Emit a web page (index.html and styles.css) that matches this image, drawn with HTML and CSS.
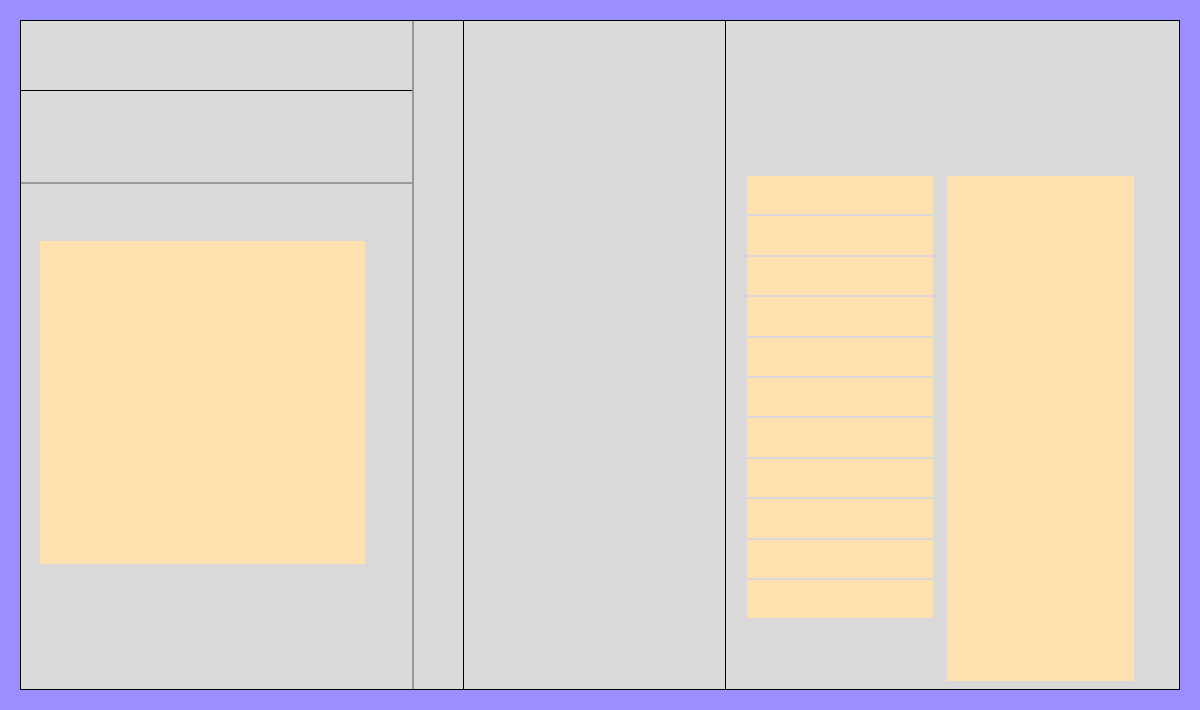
FILE: index.html
```html
<!DOCTYPE html>
<html lang="en">
<head>
    <meta charset="UTF-8">
    <meta name="viewport" content="width=device-width, initial-scale=1.0">
    <title>Layout</title>
    <link rel="stylesheet" href="styles.css">
</head>
<body>
    <div class="frame">
        <div class="col col-left">
            <div class="row row-top"></div>
            <div class="row row-mid"></div>
            <div class="row row-bottom">
                <div class="block"></div>
            </div>
        </div>
        <div class="col col-narrow"></div>
        <div class="col col-middle"></div>
        <div class="col col-right">
            <div class="panel">
                <ul class="list">
                    <li></li>
                    <li></li>
                    <li></li>
                    <li></li>
                    <li></li>
                    <li></li>
                    <li></li>
                    <li></li>
                    <li></li>
                    <li></li>
                    <li></li>
                </ul>
                <div class="tall"></div>
            </div>
        </div>
    </div>
</body>
</html>
```

FILE: styles.css
```css
html, body {
    margin: 0;
    padding: 0;
}
body {
    background: #9b8fff;
    padding: 20px;
    font-family: "Liberation Sans", Arial, sans-serif;
}
.frame {
    display: flex;
    width: 1158px;
    height: 668px;
    border: 1px solid #000;
    background: #d9d9d9;
}
.col {
    box-sizing: border-box;
}
.col-left {
    width: 393px;
    display: flex;
    flex-direction: column;
    border-right: 2px solid #999;
}
.row-top {
    height: 69px;
    border-bottom: 1px solid #000;
}
.row-mid {
    height: 91px;
    border-bottom: 2px solid #999;
}
.row-bottom {
    flex: 1;
    padding: 57px 0 0 19px;
}
.block {
    width: 325px;
    height: 323px;
    background: #ffe0af;
}
.col-narrow {
    width: 50px;
    border-right: 1px solid #000;
}
.col-middle {
    width: 262px;
    border-right: 1px solid #000;
}
.col-right {
    flex: 1;
    padding: 155px 0 0 21px;
}
.panel {
    display: flex;
    gap: 14px;
    align-items: flex-start;
}
.list {
    list-style: none;
    margin: 0;
    padding: 0;
    width: 186px;
    display: flex;
    flex-direction: column;
    gap: 2px;
}
.list li {
    height: 38.4px;
    background: #ffe0af;
}
.tall {
    width: 187px;
    height: 505px;
    background: #ffe0af;
}
```
